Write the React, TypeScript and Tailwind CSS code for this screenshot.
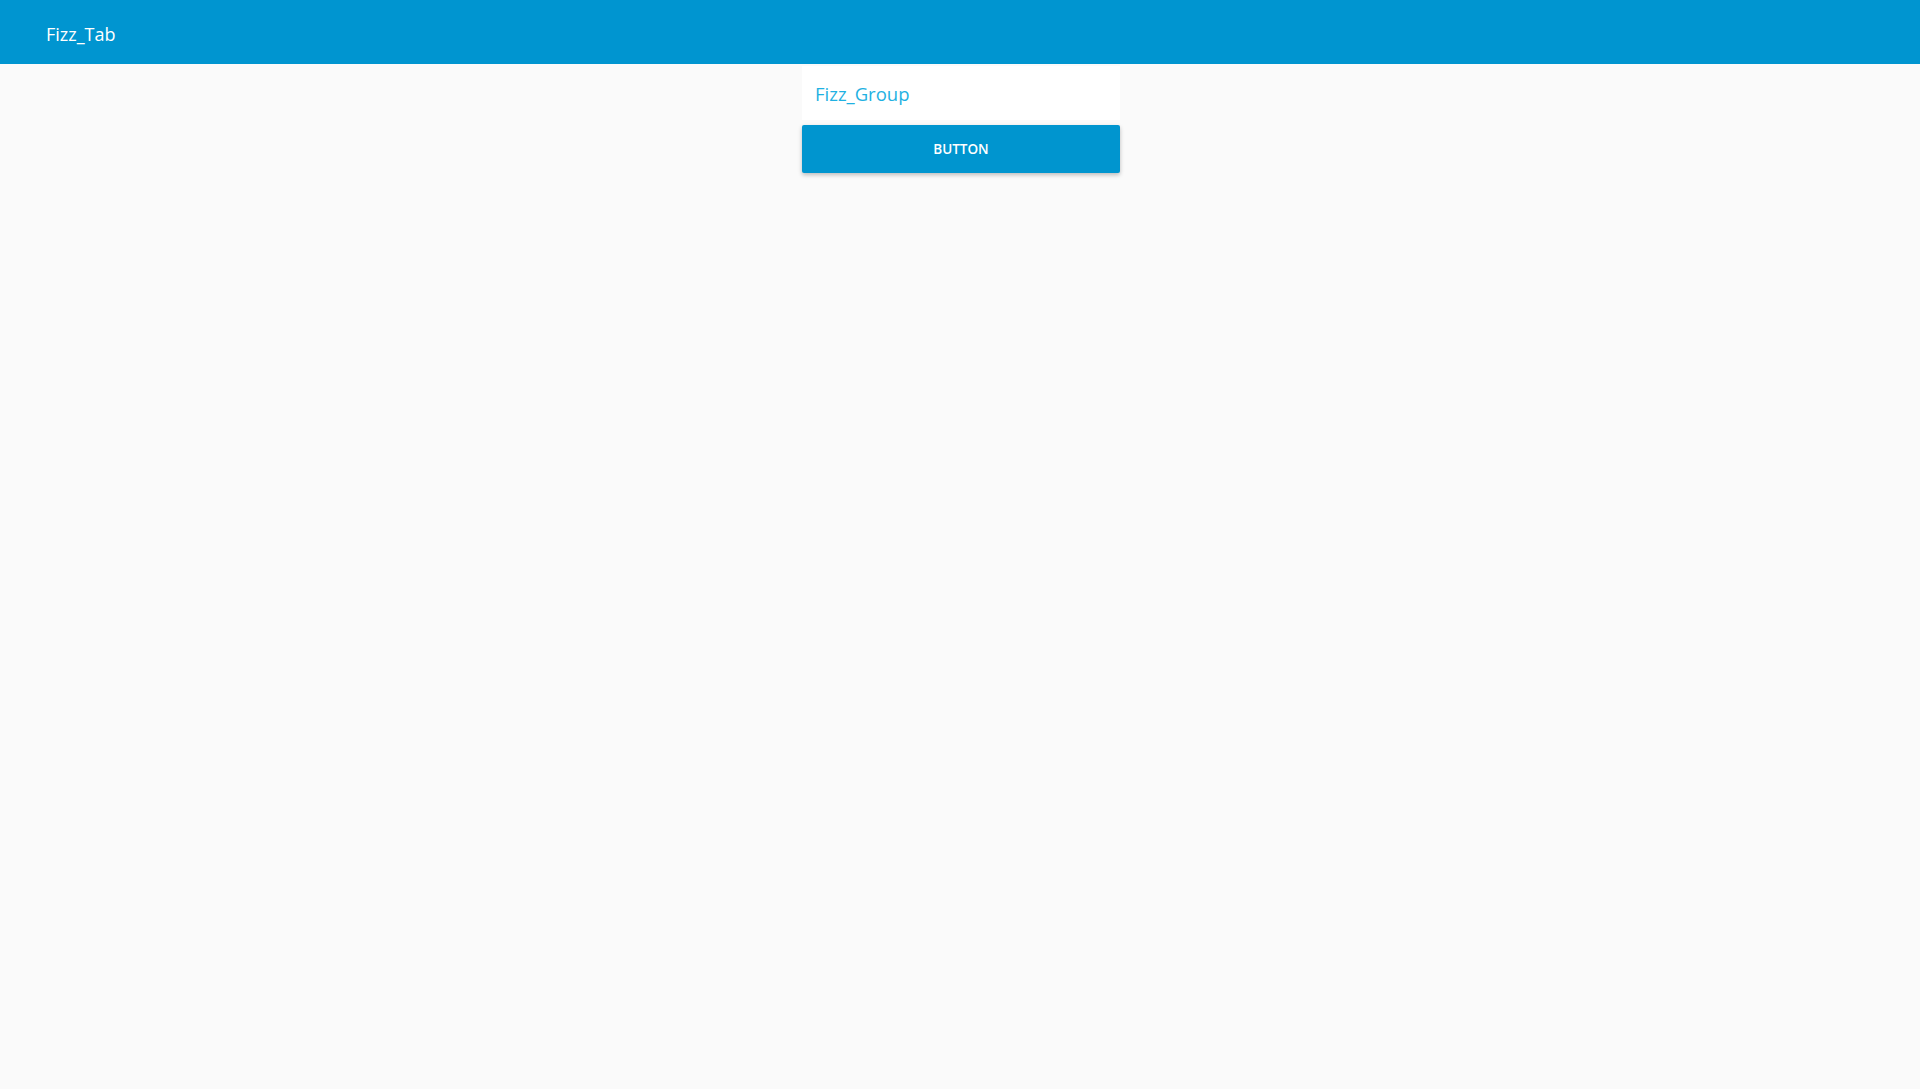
import React from "react";

export default function App() {
  return (
    <div className="min-h-[1089px] w-full bg-[#fafafa]" style={{ fontFamily: '"Open Sans", "Noto Sans", sans-serif' }}>
      <header className="h-[64px] bg-[#0095d0] flex items-center pl-[46px] pt-[3px]">
        <span className="text-white text-[18px] leading-none">Fizz_Tab</span>
      </header>
      <div className="flex justify-center pl-[2px]">
        <div className="w-[318px] flex flex-col">
          <div className="bg-white h-[54px] mt-[2px] flex items-center px-[13px] pt-[2px]">
            <span className="text-[18.5px] text-[#1fb1e2]">Fizz_Group</span>
          </div>
          <button className="mt-[5px] h-[48px] w-full rounded-[2px] bg-[#0095cf] text-white text-[13.5px] font-semibold shadow-[0_2px_4px_rgba(0,0,0,0.25)]">
            BUTTON
          </button>
        </div>
      </div>
    </div>
  );
}
